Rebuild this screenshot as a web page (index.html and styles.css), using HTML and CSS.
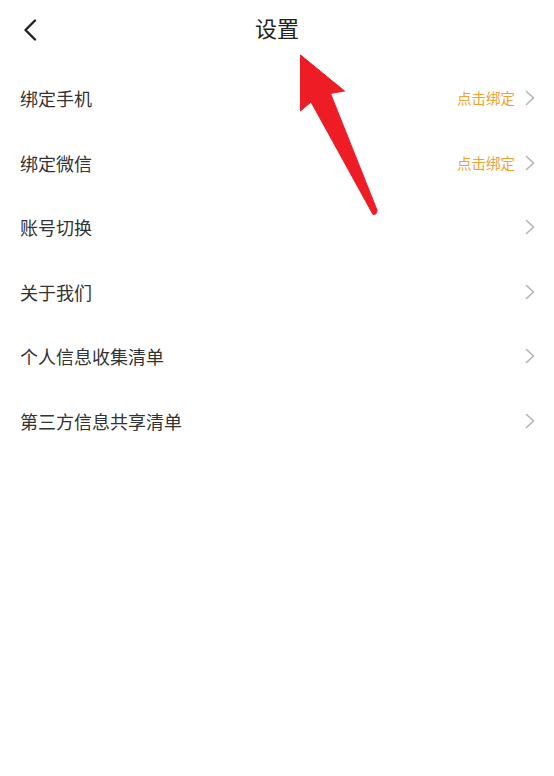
FILE: index.html
```html
<!DOCTYPE html>
<html lang="zh-CN">
<head>
<meta charset="utf-8">
<title>设置</title>
<link rel="stylesheet" href="styles.css">
</head>
<body>
<div class="page">
  <header class="header">
    <svg class="back" width="14" height="22" viewBox="0 0 14 22"><path d="M12 1.5 L2.5 11 L12 20.5" fill="none" stroke="#222" stroke-width="2.4" stroke-linecap="round" stroke-linejoin="round"/></svg>
    <h1 class="title">设置</h1>
  </header>
  <ul class="list">
    <li class="row"><span class="label">绑定手机</span><span class="right"><span class="hint">点击绑定</span><svg class="chev" width="11" height="16" viewBox="0 0 11 16"><path d="M1.5 1.5 L8.5 8 L1.5 14.5" fill="none" stroke="#b4b4b8" stroke-width="1.6" stroke-linecap="round" stroke-linejoin="round"/></svg></span></li>
    <li class="row"><span class="label">绑定微信</span><span class="right"><span class="hint">点击绑定</span><svg class="chev" width="11" height="16" viewBox="0 0 11 16"><path d="M1.5 1.5 L8.5 8 L1.5 14.5" fill="none" stroke="#b4b4b8" stroke-width="1.6" stroke-linecap="round" stroke-linejoin="round"/></svg></span></li>
    <li class="row"><span class="label">账号切换</span><span class="right"><svg class="chev" width="11" height="16" viewBox="0 0 11 16"><path d="M1.5 1.5 L8.5 8 L1.5 14.5" fill="none" stroke="#b4b4b8" stroke-width="1.6" stroke-linecap="round" stroke-linejoin="round"/></svg></span></li>
    <li class="row"><span class="label">关于我们</span><span class="right"><svg class="chev" width="11" height="16" viewBox="0 0 11 16"><path d="M1.5 1.5 L8.5 8 L1.5 14.5" fill="none" stroke="#b4b4b8" stroke-width="1.6" stroke-linecap="round" stroke-linejoin="round"/></svg></span></li>
    <li class="row"><span class="label">个人信息收集清单</span><span class="right"><svg class="chev" width="11" height="16" viewBox="0 0 11 16"><path d="M1.5 1.5 L8.5 8 L1.5 14.5" fill="none" stroke="#b4b4b8" stroke-width="1.6" stroke-linecap="round" stroke-linejoin="round"/></svg></span></li>
    <li class="row"><span class="label">第三方信息共享清单</span><span class="right"><svg class="chev" width="11" height="16" viewBox="0 0 11 16"><path d="M1.5 1.5 L8.5 8 L1.5 14.5" fill="none" stroke="#b4b4b8" stroke-width="1.6" stroke-linecap="round" stroke-linejoin="round"/></svg></span></li>
  </ul>
  <svg class="arrow" width="554" height="230" viewBox="0 0 554 230"><path d="M300.5 55 L344.5 91 L330.5 93.5 L377 210 Q377 215 373 214.5 L311 102 L300.5 111 Z" fill="#ee1c25" stroke="#ee1c25" stroke-width="1" stroke-linejoin="round"/></svg>
</div>
</body>
</html>
```
FILE: styles.css
```css
* { box-sizing: border-box; }
html, body { margin: 0; padding: 0; background: #fff; }
body { font-family: "Noto Sans CJK SC", "Noto Sans", sans-serif; }
.page { position: relative; width: 554px; height: 776px; overflow: hidden; background: #fff; }
.header { position: relative; height: 54px; display: flex; align-items: center; justify-content: center; margin-bottom: 12px; }
.back { position: absolute; left: 23px; top: 19px; }
.title { margin: 0; font-size: 22px; font-weight: 400; color: #222; line-height: 1; }
.list { list-style: none; margin: 0; padding: 0; }
.row { height: 64.5px; display: flex; align-items: center; justify-content: space-between; padding: 0 18px 0 20px; }
.label { font-size: 18px; color: #333; line-height: 1; }
.right { display: flex; align-items: center; gap: 10px; }
.hint { font-size: 14.5px; color: #f0a22e; line-height: 1; }
.chev { display: block; }
.arrow { position: absolute; left: 0; top: 0; pointer-events: none; }
```
